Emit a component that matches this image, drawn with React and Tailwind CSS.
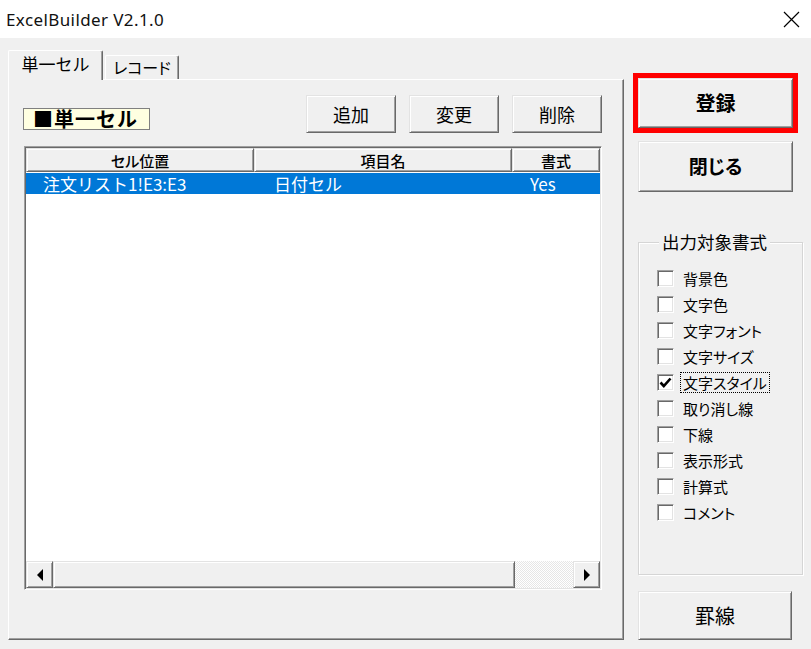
import React from "react";

function Btn({ className = "", children }) {
  return (
    <div
      className={`flex items-center justify-center bg-[#f0f0f0] border border-[#e3e3e3] border-r-[#696969] border-b-[#696969] shadow-[inset_1px_1px_0_#fff,inset_-1px_-1px_0_#a0a0a0] ${className}`}
    >
      {children}
    </div>
  );
}

function Check({ checked }) {
  return (
    <div className="w-[17px] h-[17px] shrink-0 bg-white border border-[#a0a0a0] border-r-white border-b-white shadow-[inset_1px_1px_0_#696969,inset_-1px_-1px_0_#e3e3e3] flex items-center justify-center">
      {checked && (
        <svg width="13" height="13" viewBox="0 0 13 13">
          <path d="M1.5 6.5 L4.8 10 L11.5 2.5" fill="none" stroke="#000" strokeWidth="2.6" />
        </svg>
      )}
    </div>
  );
}

export default function App() {
  const items = [
    ["背景色", false],
    ["文字色", false],
    ["文字フォント", false],
    ["文字サイズ", false],
    ["文字スタイル", true],
    ["取り消し線", false],
    ["下線", false],
    ["表示形式", false],
    ["計算式", false],
    ["コメント", false],
  ];
  return (
    <div className="w-[811px] h-[649px] bg-[#f0f0f0] font-['Noto_Sans_CJK_JP',sans-serif] text-black overflow-hidden">
      <div className="h-[38px] bg-white flex items-center justify-between pl-[6px] pr-[11px]">
        <span className="font-['Noto_Sans',sans-serif] text-[17px] leading-none text-[#111] tracking-[0.4px]">ExcelBuilder V2.1.0</span>
        <svg width="17" height="17" viewBox="0 0 17 17">
          <path d="M1 1 L16 16 M16 1 L1 16" stroke="#000" strokeWidth="1.2" />
        </svg>
      </div>
      <div className="flex h-[611px]">
        <div className="pl-[8px] pt-[12px]">
          <div className="flex items-end h-[30px] -mb-[1px] relative z-10">
            <div className="w-[95px] h-[30px] bg-[#f0f0f0] border-l border-t border-r border-l-white border-t-white border-r-[#696969] rounded-t-[2px] shadow-[inset_-1px_0_0_#a0a0a0] flex justify-center pt-[2px] text-[17px] leading-[22px]">
              単一セル
            </div>
            <div className="ml-[2px] mb-[1px] w-[74px] h-[24px] bg-[#f0f0f0] border-l border-t border-r border-l-white border-t-white border-r-[#696969] rounded-t-[2px] shadow-[inset_-1px_0_0_#a0a0a0] flex justify-center pt-[1px] text-[16px] leading-[20px] [font-feature-settings:'palt']">
              レコード
            </div>
          </div>
          <div className="w-[616px] h-[561px] bg-[#f0f0f0] border border-white border-r-[#696969] border-b-[#696969] shadow-[inset_-1px_-1px_0_#a0a0a0] pl-[14px] pr-[20px] pt-[15px]">
            <div className="flex items-start">
              <div className="mt-[13px] w-[127px] h-[22px] bg-[#ffffe1] border border-[#808080] flex items-center pl-[9px] text-[20px] font-bold leading-none tracking-[1px]">
                ■単一セル
              </div>
              <div className="ml-auto mr-[1px] flex gap-[13px]">
                <Btn className="w-[90px] h-[38px] text-[18px]">追加</Btn>
                <Btn className="w-[90px] h-[38px] text-[18px]">変更</Btn>
                <Btn className="w-[90px] h-[38px] text-[18px]">削除</Btn>
              </div>
            </div>
            <div className="mt-[13px] ml-[1px] w-[578px] h-[444px] bg-white border border-[#a0a0a0] border-r-white border-b-white shadow-[inset_1px_1px_0_#696969,inset_-1px_-1px_0_#e3e3e3] p-[1px] flex flex-col">
              <div className="flex h-[24px] text-[15px] leading-none font-medium [font-feature-settings:'palt']">
                <Btn className="w-[228px] h-full">セル位置</Btn>
                <Btn className="w-[258px] h-full">項目名</Btn>
                <Btn className="w-[88px] h-full">書式</Btn>
              </div>
              <div className="mt-[1px] h-[21px] bg-[#0078d7] text-white flex items-center text-[17px] leading-none">
                <div className="w-[228px] pl-[17px]">注文リスト1!E3:E3</div>
                <div className="w-[258px] pl-[20px]">日付セル</div>
                <div className="flex-1 pl-[18px]">Yes</div>
              </div>
              <div className="flex-1 bg-white" />
              <div className="h-[27px] flex bg-[#f0f0f0]">
                <Btn className="w-[27px] h-full">
                  <svg width="8" height="12" viewBox="0 0 8 12">
                    <path d="M7 0 L1 6 L7 12 Z" fill="#000" />
                  </svg>
                </Btn>
                <Btn className="w-[462px] h-full" />
                <div className="flex-1 h-full bg-[repeating-conic-gradient(#ffffff_0_25%,#e6e6e6_0_50%)] bg-[length:2px_2px]" />
                <Btn className="w-[27px] h-full">
                  <svg width="8" height="12" viewBox="0 0 8 12">
                    <path d="M1 0 L7 6 L1 12 Z" fill="#000" />
                  </svg>
                </Btn>
              </div>
            </div>
          </div>
        </div>
        <div className="ml-[9px] flex flex-col pt-[35px]">
          <div className="w-[165px] h-[60px] border-[5px] border-[#ff0000]">
            <Btn className="w-full h-full text-[20px] font-bold">登録</Btn>
          </div>
          <Btn className="ml-[5px] mt-[8px] w-[155px] h-[51px] text-[19px] font-bold [font-feature-settings:'palt']">閉じる</Btn>
          <div className="relative ml-[5px] mt-[50px] w-[165px] h-[333px] border border-[#d5d5d5] shadow-[inset_1px_1px_0_#fff,1px_1px_0_#fff] pt-[27px] pl-[18px]">
            <span className="absolute left-[20px] -top-[11px] bg-[#f0f0f0] px-[3px] text-[17.5px] leading-[20px]">
              出力対象書式
            </span>
            <div className="flex flex-col gap-[9px] [font-feature-settings:'palt']">
              {items.map(([label, checked]) => (
                <div key={label} className="h-[17px] flex items-center">
                  <Check checked={checked} />
                  <span
                    className={`ml-[6px] h-[21px] px-[2px] flex items-center text-[15px] leading-none border border-dotted ${
                      checked ? "border-black" : "border-transparent"
                    }`}
                  >
                    {label}
                  </span>
                </div>
              ))}
            </div>
          </div>
          <Btn className="ml-[5px] mt-[16px] w-[154px] h-[49px] text-[20px]">罫線</Btn>
        </div>
      </div>
    </div>
  );
}
